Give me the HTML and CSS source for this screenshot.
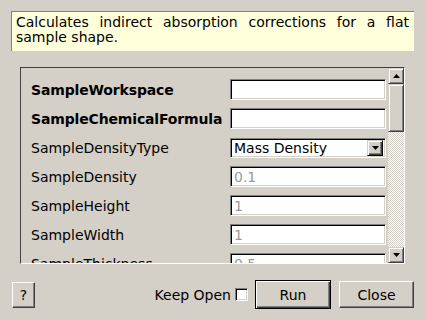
FILE: index.html
```html
<!DOCTYPE html>
<html>
<head>
<meta charset="utf-8">
<link rel="stylesheet" href="styles.css">
</head>
<body>
<div class="dlg">
  <div class="desc">Calculates indirect absorption corrections for a flat sample shape.</div>
  <div class="frame">
    <div class="content">
      <div class="grid">
        <span class="lbl bold">SampleWorkspace</span><span class="inp"></span>
        <span class="lbl bold">SampleChemicalFormula</span><span class="inp"></span>
        <span class="lbl">SampleDensityType</span>
        <span class="inp combo"><span class="ctext">Mass Density</span><span class="cbtn"><svg width="7" height="4" viewBox="0 0 7 4"><polygon points="0,0 7,0 3.5,4" fill="#000"/></svg></span></span>
        <span class="lbl">SampleDensity</span><span class="inp dis">0.1</span>
        <span class="lbl">SampleHeight</span><span class="inp dis">1</span>
        <span class="lbl">SampleWidth</span><span class="inp dis">1</span>
        <span class="lbl">SampleThickness</span><span class="inp dis">0.5</span>
      </div>
    </div>
    <div class="sbar">
      <div class="sbtn"><svg width="7" height="4" viewBox="0 0 7 4"><polygon points="3.5,0 7,4 0,4" fill="#000"/></svg></div>
      <div class="thumb"></div>
      <div class="track"></div>
      <div class="sbtn"><svg width="7" height="4" viewBox="0 0 7 4"><polygon points="0,0 7,0 3.5,4" fill="#000"/></svg></div>
    </div>
  </div>
  <div class="footer">
    <button class="btn help">?</button>
    <div class="spacer"></div>
    <span class="keep">Keep Open</span>
    <span class="check"></span>
    <button class="btn run">Run</button>
    <button class="btn close">Close</button>
  </div>
</div>
</body>
</html>
```
FILE: styles.css
```css
html, body {
  margin: 0;
  padding: 0;
  background: #d4d0c8;
  width: 426px;
  height: 320px;
  overflow: hidden;
  font-family: "DejaVu Sans", sans-serif;
  font-size: 14px;
  color: #000;
}
.dlg {
  padding: 11px 12px 0 11px;
}
.desc {
  box-sizing: border-box;
  height: 40px;
  background: #ffffdc;
  border-top: 1px solid #808080;
  border-left: 1px solid #808080;
  padding: 3px 5px 0 4px;
  line-height: 15px;
  text-align: justify;
}
.frame {
  box-sizing: border-box;
  margin: 16px 0 0 9px;
  width: 385px;
  height: 197px;
  border: 1px solid;
  border-color: #404040 #fff #fff #404040;
  display: flex;
  overflow: hidden;
}
.content {
  width: 367px;
  padding: 11px 0 0 10px;
  box-sizing: border-box;
  overflow: hidden;
}
.grid {
  display: grid;
  grid-template-columns: 199px 156px;
  grid-auto-rows: 21px;
  row-gap: 8px;
  align-items: center;
}
.lbl {
  white-space: nowrap;
}
.bold { font-weight: bold; letter-spacing: -0.15px; }
.inp {
  box-sizing: border-box;
  height: 21px;
  background: #fff;
  border: 1px solid;
  border-color: #808080 #fff #fff #808080;
  box-shadow: inset 1px 1px 0 #000, inset -1px -1px 0 #d4d0c8;
  padding: 1px 0 0 3px;
  line-height: 17px;
  display: flex;
  align-items: center;
}
.dis { color: #9a9a9a; }
.combo {
  height: 20px;
  padding-right: 2px;
}
.ctext { flex: 1; }
.cbtn {
  box-sizing: border-box;
  width: 16px;
  height: 16px;
  background: #d4d0c8;
  border-top: 1px solid #d4d0c8;
  border-left: 1px solid #d4d0c8;
  box-shadow: inset 1px 1px 0 #fff, inset -1px -1px 0 #404040, inset -2px -2px 0 #808080;
  display: flex;
  align-items: center;
  justify-content: center;
  border-right: 1px solid #000;
  border-bottom: 1px solid #000;
}
.sbar {
  width: 16px;
  display: flex;
  flex-direction: column;
}
.sbtn, .thumb {
  box-sizing: border-box;
  background: #d4d0c8;
  border-top: 1px solid #d4d0c8;
  border-left: 1px solid #d4d0c8;
  border-right: 1px solid #404040;
  border-bottom: 1px solid #404040;
  box-shadow: inset 1px 1px 0 #fff, inset -1px -1px 0 #808080;
}
.sbtn {
  height: 16px;
  display: flex;
  align-items: center;
  justify-content: center;
}
.thumb { height: 48px; }
.track {
  flex: 1;
  background: repeating-conic-gradient(#fff 0 25%, #d4d0c8 0 50%) 0 0 / 2px 2px;
}
.footer {
  margin-top: 16px;
  display: flex;
  align-items: center;
  height: 29px;
}
.spacer { flex: 1; }
.btn {
  box-sizing: border-box;
  font-family: "DejaVu Sans", sans-serif;
  font-size: 14px;
  color: #000;
  background: #d4d0c8;
  border: 1px solid;
  border-color: #fff #404040 #404040 #fff;
  box-shadow: inset -1px -1px 0 #808080;
  padding: 0;
  margin: 0;
}
.help {
  width: 23px;
  height: 26px;
  margin-left: 1px;
}
.keep { margin-right: 4px; }
.check {
  box-sizing: border-box;
  width: 13px;
  height: 13px;
  background: #fff;
  border: 1px solid;
  border-color: #808080 #fff #fff #808080;
  box-shadow: inset 1px 1px 0 #000, inset -1px -1px 0 #d4d0c8;
}
.run {
  width: 76px;
  height: 29px;
  margin-left: 7px;
  border: 1px solid #000;
  box-shadow: inset 1px 1px 0 #fff, inset -1px -1px 0 #404040, inset -2px -2px 0 #808080;
}
.close {
  width: 75px;
  height: 27px;
  margin-left: 8px;
}
```
